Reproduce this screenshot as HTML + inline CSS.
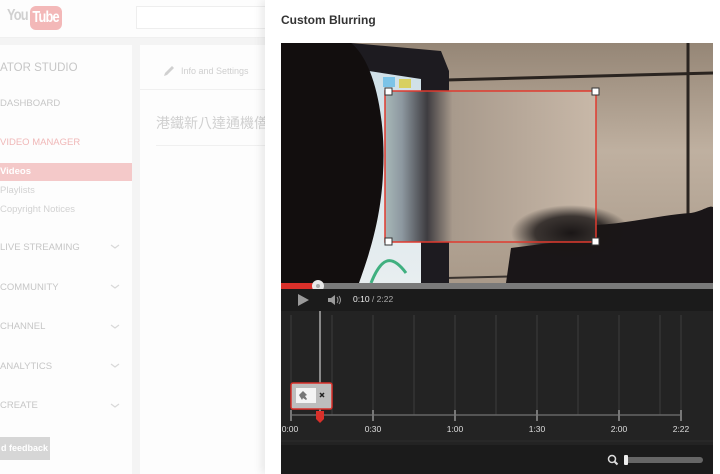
<!DOCTYPE html>
<html><head><meta charset="utf-8"><style>
*{margin:0;padding:0;box-sizing:border-box}
body{width:720px;height:474px;overflow:hidden;background:#f4f4f4;font-family:"Liberation Sans","Noto Sans CJK TC",sans-serif;position:relative}
.a{position:absolute}
.side{color:#c6c6c6;font-size:9.5px}
</style></head><body>
<div class="a" style="left:0;top:0;width:720px;height:38px;background:#fdfdfd;border-bottom:1px solid #f0f0f0"></div>
<div class="a" style="left:7px;top:7px;font:bold 16px 'Liberation Sans',sans-serif;color:#d0d0d0;letter-spacing:-1px;transform:scaleX(.8);transform-origin:left">You</div>
<div class="a" style="left:30px;top:6px;width:32px;height:24px;background:#f3b8b8;border-radius:6px;overflow:hidden"><div style="color:#fff;font:bold 16px 'Liberation Sans',sans-serif;line-height:24px;letter-spacing:-1px;transform:scaleX(.8);transform-origin:left;padding-left:3px;white-space:nowrap">Tube</div></div>
<div class="a" style="left:136px;top:6px;width:140px;height:23px;border:1px solid #eee;background:#fff"></div>
<div class="a" style="left:0;top:45px;width:132px;height:429px;background:#fdfdfd"></div>
<div class="a side" style="left:0;top:62px;font-size:11.5px;color:#c6c6c6">ATOR STUDIO</div>
<div class="a side" style="left:0;top:98px">DASHBOARD</div>
<div class="a side" style="left:0;top:137px;color:#f0b8b8">VIDEO MANAGER</div>
<div class="a" style="left:0;top:163px;width:132px;height:18px;background:#f4c9c9"></div>
<div class="a" style="left:0;top:166px;font-size:9.5px;font-weight:bold;color:#fff">Videos</div>
<div class="a side" style="left:0;top:185px;color:#d2d2d2">Playlists</div>
<div class="a side" style="left:0;top:204px;color:#d2d2d2">Copyright Notices</div>
<div class="a side" style="left:0;top:242px">LIVE STREAMING</div>
<div class="a side" style="left:0;top:282px">COMMUNITY</div>
<div class="a side" style="left:0;top:321px">CHANNEL</div>
<div class="a side" style="left:0;top:361px">ANALYTICS</div>
<div class="a side" style="left:0;top:400px">CREATE</div>
<svg class="a" style="left:110px;top:240px" width="10" height="175" fill="none" stroke="#d8d8d8" stroke-width="1.2">
<path d="M1 5l4 3 4-3M1 45l4 3 4-3M1 85l4 3 4-3M1 124l4 3 4-3M1 164l4 3 4-3"/></svg>
<div class="a" style="left:0;top:437px;width:50px;height:23px;background:#d6d6d6;color:#fff;font-size:9px;font-weight:bold;line-height:23px;padding-left:1px">d feedback</div>
<div class="a" style="left:140px;top:45px;width:130px;height:429px;background:#fdfdfd"></div>
<div class="a" style="left:140px;top:89px;width:130px;height:1px;background:#f0f0f0"></div>
<svg class="a" style="left:162px;top:64px" width="14" height="14"><path d="M2 12l1-3 7-7 2 2-7 7z" fill="#d0d0d0"/></svg>
<div class="a" style="left:181px;top:66px;font-size:9px;color:#cfcfcf">Info and Settings</div>
<div class="a" style="left:156px;top:113px;font-size:14px;color:#d0d0d0;white-space:nowrap">港鐵新八達通機僐</div>
<div class="a" style="left:156px;top:145px;width:114px;height:1px;background:#f0f0f0"></div>
<div class="a" style="left:265px;top:0;width:455px;height:474px;background:#fff;box-shadow:-4px 0 8px rgba(0,0,0,.08)"></div>
<div class="a" style="left:281px;top:13px;font-size:12px;color:#333;font-weight:bold;-webkit-text-stroke:0">Custom Blurring</div>
<svg class="a" style="left:281px;top:43px" width="432" height="240" viewBox="0 0 432 240">
<defs>
<linearGradient id="w" x1="0" y1="0" x2="0" y2="1"><stop offset="0" stop-color="#958676"/><stop offset=".45" stop-color="#bfb0a0"/><stop offset="1" stop-color="#a99a8a"/></linearGradient>
<linearGradient id="b" x1="0" y1="0" x2="1" y2="0"><stop offset="0" stop-color="#a8b8b8"/><stop offset=".08" stop-color="#8d98a0"/><stop offset=".2" stop-color="#3e3c40"/><stop offset=".32" stop-color="#a89a8c"/><stop offset="1" stop-color="#c8b8a8"/></linearGradient>
<radialGradient id="d" cx=".5" cy=".5" r=".5"><stop offset="0" stop-color="#1a1616"/><stop offset=".6" stop-color="#1a1616" stop-opacity=".8"/><stop offset="1" stop-color="#1a1616" stop-opacity="0"/></radialGradient>
<linearGradient id="s" x1="0" y1="0" x2="0" y2="1"><stop offset="0" stop-color="#cfe0e8"/><stop offset="1" stop-color="#e8eef0"/></linearGradient>
</defs>
<rect width="432" height="240" fill="url(#w)"/>
<path d="M165 37L432 30" stroke="#2a2420" stroke-width="3"/>
<path d="M407 0L407 180" stroke="#2a2420" stroke-width="3"/>
<path d="M165 235L290 232" stroke="#3a3430" stroke-width="2"/>
<path d="M70 0L160 8L168 28L168 240L70 240Z" fill="#1d1b20"/>
<path d="M75 26L140 36L140 240L75 240Z" fill="url(#s)"/>
<rect x="102" y="34" width="12" height="10" fill="#7cc4e8"/><rect x="118" y="36" width="12" height="9" fill="#d8d060"/>
<path d="M90 240C100 215 110 210 125 230" stroke="#40b080" stroke-width="3" fill="none"/>
<path d="M0 0L70 0C95 20 105 80 102 130C100 180 85 220 78 240L0 240Z" fill="#120e0e"/>
<path d="M315 182C350 180 380 172 410 170C422 168 428 162 432 164L432 240L225 240L230 205L300 196Z" fill="#1a1618"/>
<rect x="104" y="48" width="211" height="151" fill="url(#b)"/>
<ellipse cx="290" cy="190" rx="60" ry="28" fill="url(#d)"/>
<rect x="104" y="48" width="211" height="151" fill="none" stroke="#e03a2f" stroke-width="1.5"/>
<g fill="#fff" stroke="#333" stroke-width="1"><rect x="104" y="45" width="7" height="7"/><rect x="311" y="45" width="7" height="7"/><rect x="104" y="195" width="7" height="7"/><rect x="311" y="195" width="7" height="7"/></g>
</svg>
<div class="a" style="left:281px;top:283px;width:432px;height:6px;background:#7a7a7a"></div>
<div class="a" style="left:281px;top:283px;width:37px;height:6px;background:#d9302a"></div>
<div class="a" style="left:312px;top:280px;width:12px;height:12px;border-radius:50%;background:#e8e8e8"></div>
<div class="a" style="left:316px;top:284px;width:4px;height:4px;border-radius:50%;background:#aaa"></div>
<div class="a" style="left:281px;top:289px;width:432px;height:22px;background:#1b1b1b"></div>
<svg class="a" style="left:296px;top:292px" width="52" height="16"><path d="M2 2L13 8L2 14Z" fill="#9a9a9a"/><path d="M32 6h3l4-3v10l-4-3h-3z" fill="#9a9a9a"/><path d="M41 5q2 3 0 6M43 4q3 4 0 8" stroke="#9a9a9a" fill="none"/></svg>
<div class="a" style="left:353px;top:294px;font-size:8.5px;color:#eee">0:10 <span style="color:#aaa">/ 2:22</span></div>
<div class="a" style="left:281px;top:311px;width:432px;height:163px;background:#232323"></div>
<svg class="a" style="left:281px;top:311px" width="432" height="163">
<g stroke="#3c3c3c" stroke-width="1"><path d="M10 4V104M51 4V104M92 4V104M133 4V104M174 4V104M215 4V104M256 4V104M297 4V104M338 4V104M379 4V104M400 4V104"/></g>
<path d="M10 104H400" stroke="#666" stroke-width="1.5"/>
<g stroke="#777" stroke-width="2"><path d="M10 99V110M92 99V110M174 99V110M256 99V110M338 99V110M400 99V110"/></g>
<path d="M39 0V100" stroke="#aaa" stroke-width="1.5"/>
<path d="M35 100H43V108L39 112L35 108Z" fill="#d9302a"/>
<rect x="10" y="72" width="41" height="26" rx="2" fill="#bdbdbd" stroke="#d9302a" stroke-width="1.5"/>
<rect x="15" y="77" width="20" height="15" fill="#f4f4f4"/>
<path d="M22 80l4 4-2 1 2 3-1 1-3-2-1 2-3-5z" fill="#777"/>
<path d="M39 82l4 4M43 82l-4 4" stroke="#222" stroke-width="1.5"/>
<path d="M0 130H432" stroke="#2e2e2e"/>
<rect x="0" y="134" width="432" height="29" fill="#1b1b1b"/>
<circle cx="331" cy="148" r="3.5" fill="none" stroke="#ddd" stroke-width="1.5"/><path d="M333.5 150.5l3 3" stroke="#ddd" stroke-width="2"/>
<rect x="344" y="146" width="78" height="6" rx="3" fill="#666"/>
<rect x="343" y="144" width="4" height="10" rx="1" fill="#eee"/>
<g fill="#ddd" font-family="Liberation Sans" font-size="8.5" text-anchor="middle"><text x="9" y="121">0:00</text><text x="92" y="121">0:30</text><text x="174" y="121">1:00</text><text x="256" y="121">1:30</text><text x="338" y="121">2:00</text><text x="400" y="121">2:22</text></g>
</svg>
</body></html>
